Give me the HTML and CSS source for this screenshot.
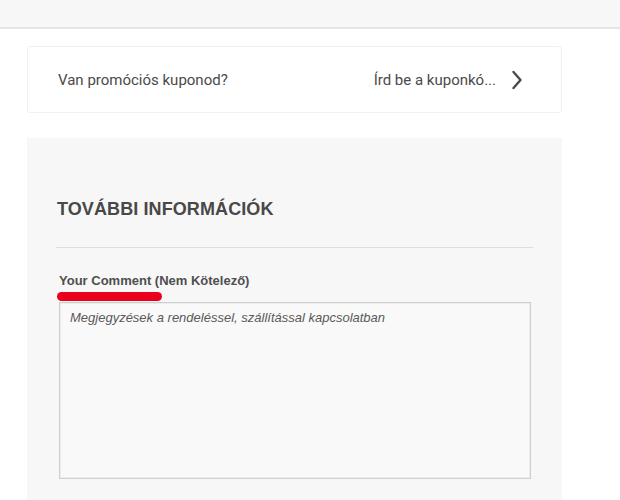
FILE: index.html
```html
<!DOCTYPE html>
<html lang="hu">
<head>
<meta charset="utf-8">
<title>Pénztár</title>
<link rel="stylesheet" href="styles.css">
</head>
<body>
<header class="topbar"></header>
<main class="main">
  <div class="coupon">
    <span class="coupon-q">Van promóciós kuponod?</span>
    <span class="coupon-action">
      <span class="coupon-hint">Írd be a kuponkó...</span>
      <svg class="chevron" width="12" height="20" viewBox="0 0 12 20" aria-hidden="true">
        <path d="M2.5 2 L9.5 10 L2.5 18" fill="none" stroke="#4a4a4a" stroke-width="2.4" stroke-linecap="round" stroke-linejoin="round"/>
      </svg>
    </span>
  </div>
  <section class="panel">
    <h2 class="panel-title">TOVÁBBI INFORMÁCIÓK</h2>
    <hr class="sep">
    <label class="field-label" for="comment">Your Comment (Nem Kötelező)<span class="mark"></span></label>
    <textarea id="comment" class="comment" placeholder="Megjegyzések a rendeléssel, szállítással kapcsolatban"></textarea>
  </section>
</main>
</body>
</html>
```

FILE: styles.css
```css
html, body {
  margin: 0;
  padding: 0;
  background: #ffffff;
}
body {
  font-family: "Liberation Sans", Arial, sans-serif;
  color: #4a4a4a;
  height: 500px;
  overflow: hidden;
}
.topbar {
  height: 27px;
  background: #f7f7f7;
  border-bottom: 2px solid #e6e6e6;
}
.main {
  width: 535px;
  margin-left: 27px;
}
.coupon {
  margin-top: 17px;
  border: 1px solid #f1f1f1;
  border-radius: 3px;
  box-sizing: border-box;
  height: 67px;
  display: flex;
  align-items: center;
  justify-content: space-between;
  padding: 0 38px 0 30px;
  font-family: Roboto, "Liberation Sans", sans-serif;
  font-size: 15px;
  color: #4a4a4a;
  background: #fff;
}
.coupon-action {
  display: flex;
  align-items: center;
  gap: 15px;
}
.coupon-hint {
  padding-left: 2px;
}
.chevron {
  display: block;
}
.panel {
  margin-top: 25px;
  background: #f7f7f7;
  padding: 61px 29px 0 29px;
  height: 362px;
  box-sizing: border-box;
}
.panel-title {
  margin: 0;
  font-size: 18px;
  line-height: 20px;
  font-weight: bold;
  color: #484848;
  letter-spacing: 0.1px;
  padding-left: 1px;
}
.sep {
  margin: 28px 0 0 0;
  border: 0;
  border-top: 1px solid #dedede;
  height: 0;
}
.field-label {
  position: relative;
  display: block;
  margin-top: 25px;
  padding-left: 3px;
  font-size: 13px;
  line-height: 16px;
  font-weight: bold;
  color: #4f4f4f;
}
.mark {
  position: absolute;
  left: 1px;
  top: 19px;
  width: 105px;
  height: 9px;
  border-radius: 5px;
  background: #e8001c;
}
.comment {
  display: block;
  margin: 13px 0 0 3px;
  width: 472px;
  height: 177px;
  box-sizing: border-box;
  border: 1px solid #cfcfcf;
  box-shadow: inset 0 0 0 1px #ececec;
  background: #f9f9f9;
  padding: 7px 10px;
  font-family: "Liberation Sans", Arial, sans-serif;
  font-size: 13px;
  font-style: italic;
  color: #555;
  resize: none;
  outline: none;
}
.comment::placeholder {
  color: #5a5a5a;
  font-style: italic;
  opacity: 1;
}
```
